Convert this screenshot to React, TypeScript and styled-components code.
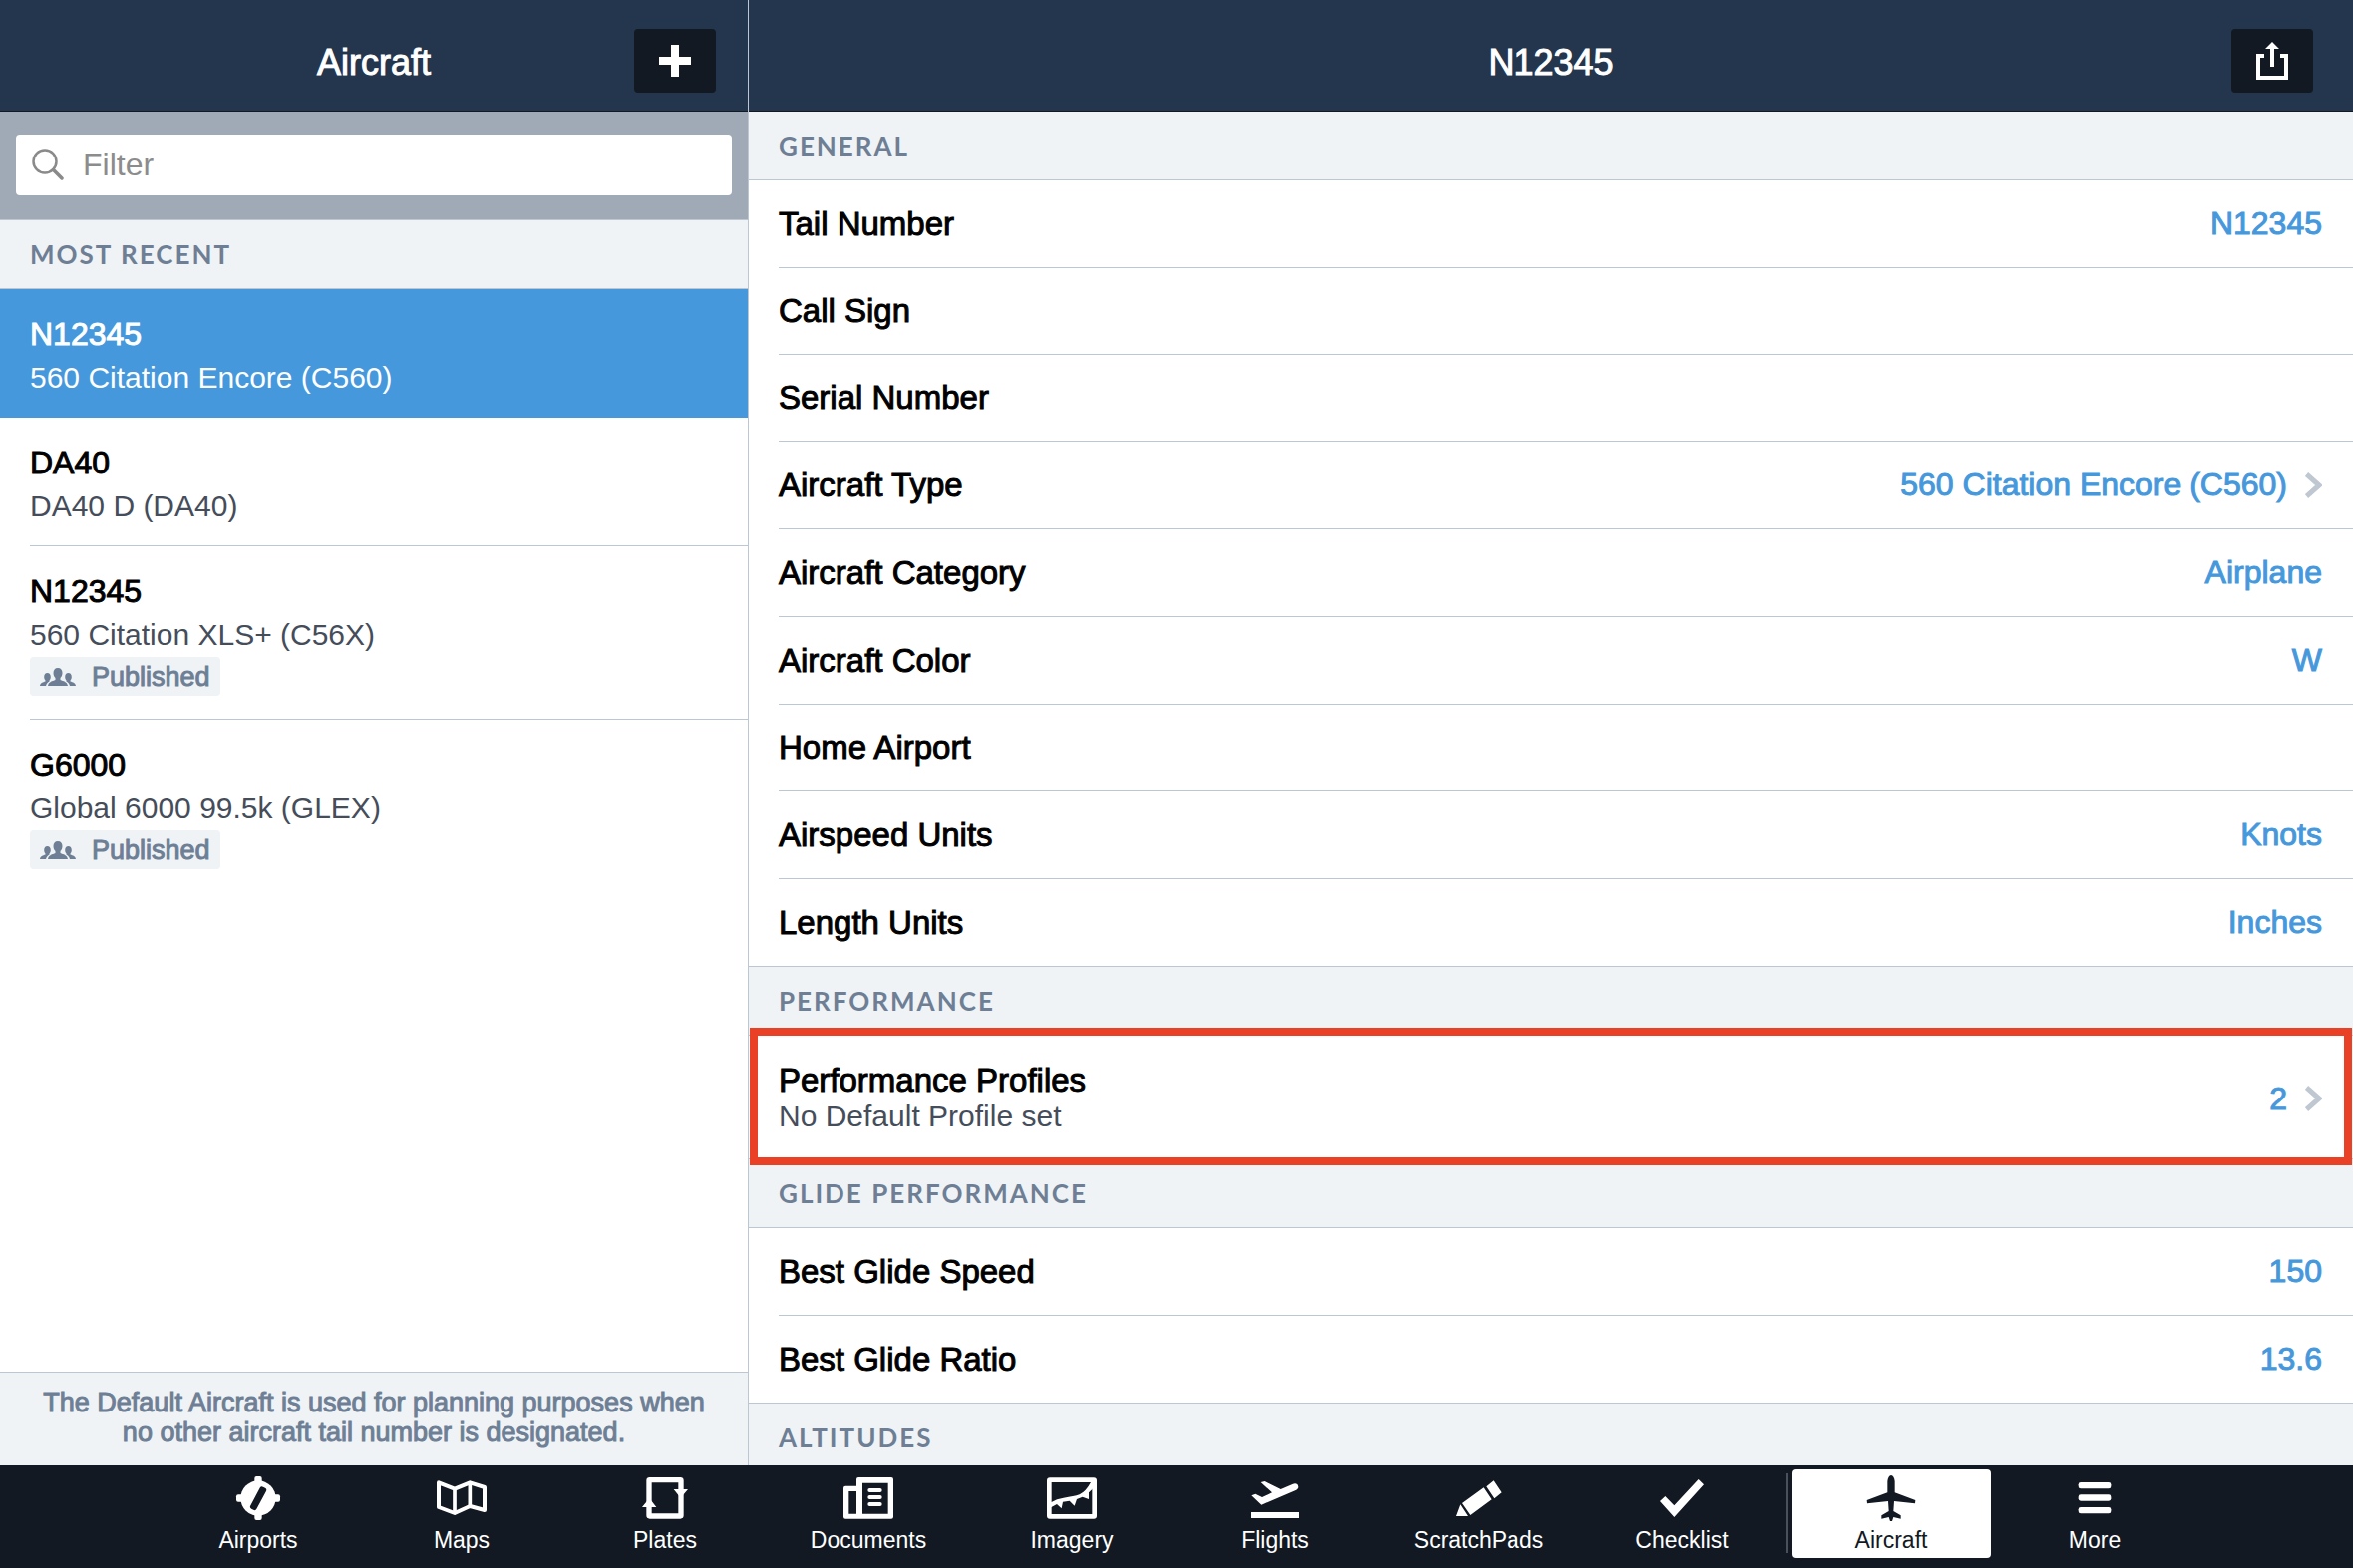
import React from "react";
import styled, { createGlobalStyle, css } from "styled-components";

const color = {
  navy: "#24364e",
  ink: "#121923",
  line: "#bdc6d3",
  panel: "#eff3f6",
  slate: "#6e7f95",
  sub: "#454d5a",
  blue: "#4698dc",
  filter: "#a0aab6",
  chevron: "#bfc7d1",
  alert: "#ea4026",
};

const Global = createGlobalStyle`
  * { box-sizing: border-box; }
  body { margin: 0; }
  body, button, input { font-family: "Liberation Sans", Arial, sans-serif; }
  h1, h2, p, ul { margin: 0; padding: 0; font-weight: 400; }
  ul { list-style: none; }
  button { border: 0; padding: 0; background: none; color: inherit; cursor: pointer; }
`;

const medium = css`
  -webkit-text-stroke: 1px currentColor;
`;

const Screen = styled.div`
  display: flex;
  flex-direction: column;
  height: 100vh;
  overflow: hidden;
  background: #fff;
`;

const Panes = styled.div`
  flex: 1;
  min-height: 0;
  display: grid;
  grid-template-columns: minmax(0, 751px) minmax(0, 1fr);
`;

const Sidebar = styled.aside`
  display: flex;
  flex-direction: column;
  min-height: 0;
  border-right: 1px solid ${color.line};
`;

const Detail = styled.main`
  min-height: 0;
  overflow: hidden;
`;

const Header = styled.header<{ $edge: number }>`
  display: grid;
  grid-template-columns: 1fr auto 1fr;
  align-items: start;
  padding: 29px ${(p) => p.$edge}px 14px;
  background: ${color.navy};
  border-bottom: 1px solid ${color.ink};
`;

const Title = styled.h1`
  grid-column: 2;
  font-size: 36px;
  line-height: 68px;
  color: #fff;
  ${medium}
`;

const HeaderButton = styled.button`
  justify-self: end;
  display: flex;
  align-items: center;
  justify-content: center;
  width: 82px;
  height: 64px;
  border-radius: 4px;
  background: ${color.ink};
`;

const FilterBar = styled.div`
  padding: 23px 16px 24px;
  background: ${color.filter};
  border-bottom: 1px solid ${color.line};
`;

const FilterBox = styled.label`
  display: flex;
  align-items: center;
  gap: 19px;
  height: 61px;
  padding: 0 16px 2px;
  border-radius: 4px;
  background: #fff;
`;

const FilterInput = styled.input`
  flex: 1;
  min-width: 0;
  border: 0;
  padding: 0;
  outline: 0;
  font-size: 32px;
  line-height: 40px;
  background: transparent;
  &::placeholder { color: #8c8c8c; opacity: 1; }
`;

const SectionTitle = styled.h2`
  padding: 0 30px;
  font-family: Lato, sans-serif;
  font-size: 26px;
  font-weight: 700;
  line-height: 68px;
  letter-spacing: 2px;
  text-transform: uppercase;
  color: ${color.slate};
  background: ${color.panel};
  border-bottom: 1px solid ${color.line};
`;

const AircraftList = styled.ul`
  flex: 1;
  min-height: 0;
  overflow: hidden;
`;

const AircraftButton = styled.button<{ $selected?: boolean }>`
  display: block;
  width: 100%;
  padding-left: 30px;
  text-align: left;
  color: ${(p) => (p.$selected ? "#fff" : "#000")};
  background: ${(p) => (p.$selected ? color.blue : "#fff")};
`;

const AircraftBody = styled.span<{ $line: boolean }>`
  display: flex;
  flex-direction: column;
  align-items: flex-start;
  padding: 23px 0 17px;
  border-bottom: 1px solid ${(p) => (p.$line ? color.line : "transparent")};
`;

const AircraftName = styled.span`
  font-size: 32px;
  line-height: 44px;
  ${medium}
`;

const AircraftModel = styled.span<{ $selected?: boolean }>`
  font-size: 30px;
  line-height: 44px;
  color: ${(p) => (p.$selected ? "#fff" : color.sub)};
`;

const Badge = styled.span`
  display: flex;
  align-items: center;
  gap: 16px;
  margin: 0 0 6px;
  padding: 1px 10px 0;
  border-radius: 4px;
  font-size: 27px;
  line-height: 38px;
  color: ${color.slate};
  background: ${color.panel};
  ${medium}
`;

const Note = styled.p`
  padding: 15px 30px 18px;
  font-size: 27px;
  line-height: 30px;
  text-align: center;
  color: ${color.slate};
  background: ${color.panel};
  border-top: 1px solid ${color.line};
  ${medium}
`;

const FieldList = styled.ul`
  border-bottom: 1px solid ${color.line};
`;

const FieldItem = styled.li`
  position: relative;
  padding-left: 30px;
  & + & > * { border-top: 1px solid ${color.line}; }
`;

const Field = styled.div<{ $tall?: boolean }>`
  display: flex;
  align-items: center;
  justify-content: space-between;
  width: 100%;
  padding: ${(p) => (p.$tall ? "27px 31px 24px 0" : "27px 31px 27px 0")};
  text-align: left;
`;

const FieldLabel = styled.span<{ $tall?: boolean }>`
  display: block;
  font-size: 33px;
  line-height: ${(p) => (p.$tall ? 36 : 32)}px;
  color: #000;
  ${medium}
`;

const FieldNote = styled.span`
  display: block;
  font-size: 30px;
  line-height: 36px;
  color: ${color.sub};
`;

const FieldValue = styled.span`
  display: flex;
  align-items: center;
  gap: 18px;
  font-size: 32px;
  line-height: 33px;
  color: ${color.blue};
  ${medium}
`;

const Highlight = styled.div`
  position: absolute;
  inset: -8px 1px -7px 1px;
  border: 8px solid ${color.alert};
  pointer-events: none;
`;

const TabBar = styled.nav`
  display: flex;
  justify-content: center;
  gap: 4px;
  padding: 4px 0 10px;
  background: ${color.ink};
`;

const Tab = styled.button<{ $active?: boolean }>`
  display: flex;
  flex-direction: column;
  align-items: center;
  gap: 4px;
  flex: 0 1 200px;
  padding: 4px 0 5px;
  border-radius: 4px;
  font-size: 23px;
  line-height: 26px;
  color: ${(p) => (p.$active ? color.ink : "#fff")};
  background: ${(p) => (p.$active ? "#fff" : "transparent")};
`;

const TabDivider = styled.span`
  width: 2px;
  margin: 4px 0 5px;
  background: #4b515b;
`;

const TabSvg = styled.svg`
  display: block;
  width: 50px;
  height: 50px;
  fill: currentColor;
`;

const tabIcons: Record<string, React.ReactNode> = {
  Airports: (
    <>
      <circle cx="75" cy="75" r="53" />
      <rect x="64" y="9" width="22" height="132" rx="6" />
      <rect x="9" y="64" width="132" height="22" rx="6" />
      <rect x="65" y="38" width="21" height="75" rx="7" fill={color.ink} transform="rotate(28 75 75)" />
    </>
  ),
  Maps: (
    <g fill="none" stroke="currentColor" strokeWidth="12" strokeLinejoin="round">
      <path d="M6 28 54 47 100 28 144 42V111L100 99 54 120 6 102Z" />
      <path d="M54 47V120M100 28V99" strokeWidth="11" />
    </g>
  ),
  Plates: (
    <>
      <rect x="27" y="20" width="96" height="109" rx="2" fill="none" stroke="currentColor" strokeWidth="16" />
      <path d="M101 48H144L122 74ZM6 102H49L28 75Z" />
    </>
  ),
  Documents: (
    <>
      <path
        fillRule="evenodd"
        d="M6 38H39V18Q39 12 45 12H144Q150 12 150 18V131Q150 137 144 137H6Q0 137 0 131V44Q0 38 6 38ZM16 54V122H39V54ZM57 29V122H134V29Z"
      />
      <rect x="73" y="45" width="43" height="12" rx="6" />
      <rect x="73" y="66" width="43" height="12" rx="6" />
      <rect x="73" y="87" width="43" height="12" rx="6" />
    </>
  ),
  Imagery: (
    <>
      <rect x="7" y="20" width="136" height="110" rx="2" fill="none" stroke="currentColor" strokeWidth="14" />
      <path d="M12 88Q30 76 50 74Q82 70 98 64Q118 54 132 27H140V44L126 58V78L107 71 90 78 83 98 68 83 48 86 44 106 30 93 12 103Z" />
    </>
  ),
  Flights: (
    <path d="M32 27 44 24 92 48 129 32Q143 28 145 41 146 46 139 50L34 95 4 67 16 62 36 72 66 58ZM3 117H147V135H3Z" />
  ),
  ScratchPads: <path d="M119 22 143 58 121 76 97 40ZM89 43 113 79 49 126 24 90ZM19 94 42 129H6Z" />,
  Checklist: <path d="M9 84 25 69 52 97 125 18 141 34 52 132Z" />,
  Aircraft: (
    <path d="M75 6Q84 8 86 24V58L148 81 147 91 84 84 82 114 104 127V137L82 132 78 144H72L68 132 46 137V127L68 114 66 84 3 91 2 81 64 58V24Q66 8 75 6Z" />
  ),
  More: (
    <>
      <rect x="26" y="27" width="98" height="19" rx="7" />
      <rect x="26" y="64" width="98" height="19" rx="7" />
      <rect x="26" y="102" width="98" height="19" rx="7" />
    </>
  ),
};

const PlusIcon = () => (
  <svg width="32" height="32" viewBox="0 0 32 32" fill="#fff" aria-hidden="true">
    <path d="M12 0h8v12h12v8H20v12h-8V20H0v-8h12z" />
  </svg>
);

const ShareIcon = () => (
  <svg width="32" height="38" viewBox="0 0 32 38" aria-hidden="true">
    <path d="M8 14H2V36H30V14H24" fill="none" stroke="#fff" strokeWidth="4" />
    <path d="M16 0 23 7H18V25H14V7H9Z" fill="#fff" />
  </svg>
);

const SearchIcon = () => (
  <svg width="32" height="32" viewBox="0 0 32 32" fill="none" stroke="#8a8a8a" aria-hidden="true">
    <circle cx="13" cy="13" r="11.5" strokeWidth="2.5" />
    <path d="M21.5 21.5 30 30" strokeWidth="3.5" strokeLinecap="round" />
  </svg>
);

const Chevron = () => (
  <svg width="17" height="26" viewBox="0 0 17 26" fill="none" stroke={color.chevron} strokeWidth="5" aria-hidden="true">
    <path d="M1.5 2 14 13 1.5 24" />
  </svg>
);

const PeopleIcon = () => (
  <svg width="36" height="18" viewBox="0 0 36 18" fill="currentColor" aria-hidden="true">
    <path d="M18 0c3 0 4.500 2 4.500 5 0 2-.8 4-2 5v2c3 1.200 7 2 7.500 6H8c.5-4 4.500-4.800 7.500-6v-2c-1.200-1-2-3-2-5 0-3 1.500-5 4.500-5z" />
    <path d="M7.500 5c2 0 3.300 1.500 3.300 4 0 1.500-.5 2.800-1.300 3.500v1c-1.500 1-3 2-3.500 4.500H0c.3-3 3-3.500 5.500-4.500v-1C4.700 11.800 4.200 10.500 4.200 9c0-2.500 1.300-4 3.300-4z" />
    <path d="M28.500 5c-2 0-3.300 1.500-3.300 4 0 1.500.5 2.800 1.300 3.500v1c1.500 1 3 2 3.500 4.500h6c-.3-3-3-3.500-5.500-4.500v-1c.8-.7 1.300-2 1.300-3.500 0-2.500-1.300-4-3.300-4z" />
  </svg>
);

type Plane = { name: string; model: string; published?: boolean };

const planes: Plane[] = [
  { name: "N12345", model: "560 Citation Encore (C560)" },
  { name: "DA40", model: "DA40 D (DA40)" },
  { name: "N12345", model: "560 Citation XLS+ (C56X)", published: true },
  { name: "G6000", model: "Global 6000 99.5k (GLEX)", published: true },
];

type Entry = { label: string; value?: string; note?: string; link?: boolean; highlight?: boolean };

const sections: { title: string; entries: Entry[] }[] = [
  {
    title: "General",
    entries: [
      { label: "Tail Number", value: "N12345" },
      { label: "Call Sign" },
      { label: "Serial Number" },
      { label: "Aircraft Type", value: "560 Citation Encore (C560)", link: true },
      { label: "Aircraft Category", value: "Airplane" },
      { label: "Aircraft Color", value: "W" },
      { label: "Home Airport" },
      { label: "Airspeed Units", value: "Knots" },
      { label: "Length Units", value: "Inches" },
    ],
  },
  {
    title: "Performance",
    entries: [
      { label: "Performance Profiles", note: "No Default Profile set", value: "2", link: true, highlight: true },
    ],
  },
  {
    title: "Glide Performance",
    entries: [
      { label: "Best Glide Speed", value: "150" },
      { label: "Best Glide Ratio", value: "13.6" },
    ],
  },
  { title: "Altitudes", entries: [] },
];

const tabs = ["Airports", "Maps", "Plates", "Documents", "Imagery", "Flights", "ScratchPads", "Checklist", "Aircraft", "More"];

function FieldRow({ entry }: { entry: Entry }) {
  const tall = Boolean(entry.note);
  return (
    <FieldItem>
      <Field as={entry.link ? "button" : "div"} $tall={tall}>
        <span>
          <FieldLabel $tall={tall}>{entry.label}</FieldLabel>
          {entry.note && <FieldNote>{entry.note}</FieldNote>}
        </span>
        {entry.value && (
          <FieldValue>
            {entry.value}
            {entry.link && <Chevron />}
          </FieldValue>
        )}
      </Field>
      {entry.highlight && <Highlight />}
    </FieldItem>
  );
}

export default function App() {
  return (
    <Screen>
      <Global />
      <Panes>
        <Sidebar>
          <Header $edge={32}>
            <Title>Aircraft</Title>
            <HeaderButton aria-label="Add aircraft">
              <PlusIcon />
            </HeaderButton>
          </Header>
          <FilterBar>
            <FilterBox htmlFor="aircraft-filter">
              <SearchIcon />
              <FilterInput id="aircraft-filter" type="text" placeholder="Filter" aria-label="Filter" />
            </FilterBox>
          </FilterBar>
          <SectionTitle>Most Recent</SectionTitle>
          <AircraftList>
            {planes.map((plane, i) => (
              <li key={plane.model}>
                <AircraftButton $selected={i === 0}>
                  <AircraftBody $line={i > 0 && i < planes.length - 1}>
                    <AircraftName>{plane.name}</AircraftName>
                    <AircraftModel $selected={i === 0}>{plane.model}</AircraftModel>
                    {plane.published && (
                      <Badge>
                        <PeopleIcon />
                        Published
                      </Badge>
                    )}
                  </AircraftBody>
                </AircraftButton>
              </li>
            ))}
          </AircraftList>
          <Note>The Default Aircraft is used for planning purposes when no other aircraft tail number is designated.</Note>
        </Sidebar>
        <Detail>
          <Header $edge={40}>
            <Title as="h2">N12345</Title>
            <HeaderButton aria-label="Share">
              <ShareIcon />
            </HeaderButton>
          </Header>
          {sections.map((section) => (
            <section key={section.title}>
              <SectionTitle>{section.title}</SectionTitle>
              <FieldList>
                {section.entries.map((entry) => (
                  <FieldRow key={entry.label} entry={entry} />
                ))}
              </FieldList>
            </section>
          ))}
        </Detail>
      </Panes>
      <TabBar>
        {tabs.map((name) => (
          <React.Fragment key={name}>
            {name === "Aircraft" && <TabDivider />}
            <Tab $active={name === "Aircraft"}>
              <TabSvg viewBox="0 0 150 150" aria-hidden="true">
                {tabIcons[name]}
              </TabSvg>
              {name}
            </Tab>
          </React.Fragment>
        ))}
      </TabBar>
    </Screen>
  );
}
